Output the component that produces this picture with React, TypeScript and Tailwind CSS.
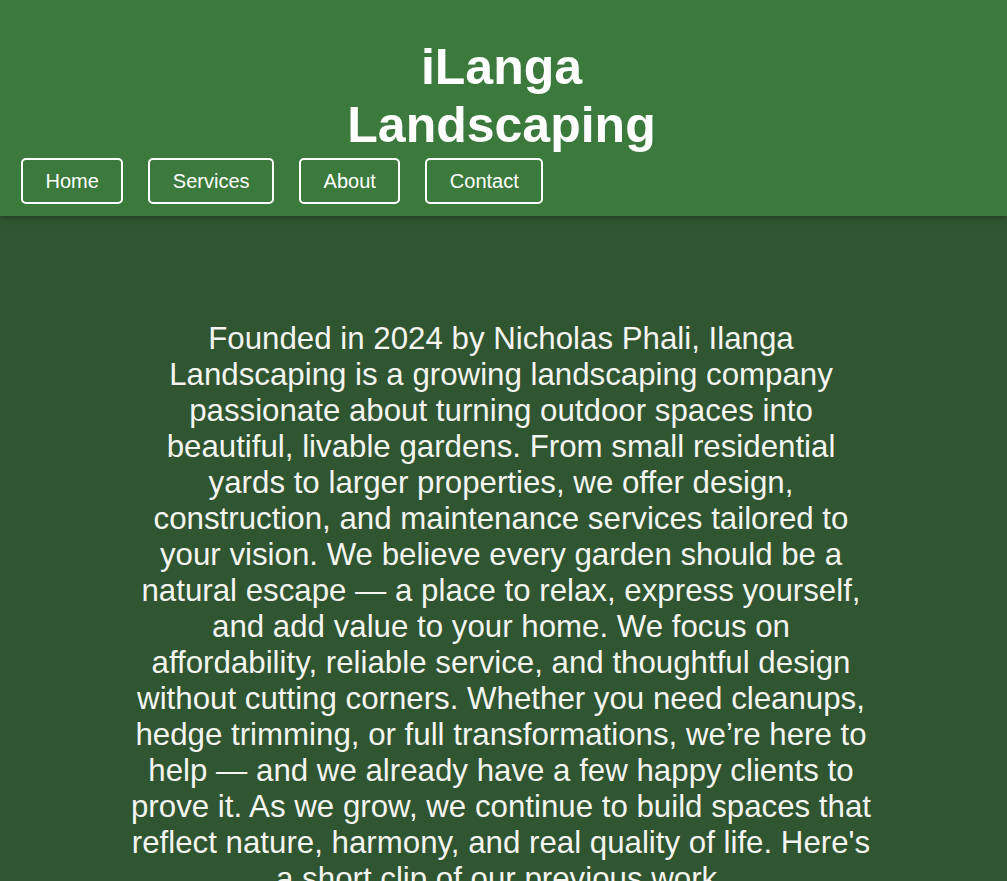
import React from "react";

const links = ["Home", "Services", "About", "Contact"];

const App = () => {
  return (
    <div className="min-h-screen bg-[#2f5531] font-['Liberation_Sans',Arial,sans-serif] text-white">
      <header className="bg-[#3b7a3c] pt-[38px] pb-[12px] px-[21px] shadow-[0_2px_6px_rgba(0,0,0,0.3)] relative">
        <h1 className="mx-auto w-[340px] text-center text-[50px] font-bold leading-[58px] -translate-x-[2px]">
          iLanga Landscaping
        </h1>
        <nav className="mt-[4px] flex gap-[25px]">
          {links.map((l) => (
            <a
              key={l}
              href="#"
              className="h-[46px] px-[22.5px] flex items-center border-2 border-white rounded-[5px] text-[20px] text-white"
            >
              {l}
            </a>
          ))}
        </nav>
      </header>
      <main className="pt-[105px] pb-10 pr-[5px]">
        <p className="mx-auto w-[744px] text-center text-[31.25px] leading-[36px] text-[#f4f4f0]">
          Founded in 2024 by Nicholas Phali, Ilanga Landscaping is a growing
          landscaping company passionate about turning outdoor spaces into
          beautiful, livable gardens. From small residential yards to larger
          properties, we offer design, construction, and maintenance services
          tailored to your vision. We believe every garden should be a natural
          escape — a place to relax, express yourself, and add value to your
          home. We focus on affordability, reliable service, and thoughtful
          design without cutting corners. Whether you need cleanups, hedge
          trimming, or full transformations, we’re here to help — and we already
          have a few happy clients to prove it. As we grow, we continue to build
          spaces that reflect nature, harmony, and real quality of life. Here's
          a short clip of our previous work.
        </p>
      </main>
    </div>
  );
};

export default App;
